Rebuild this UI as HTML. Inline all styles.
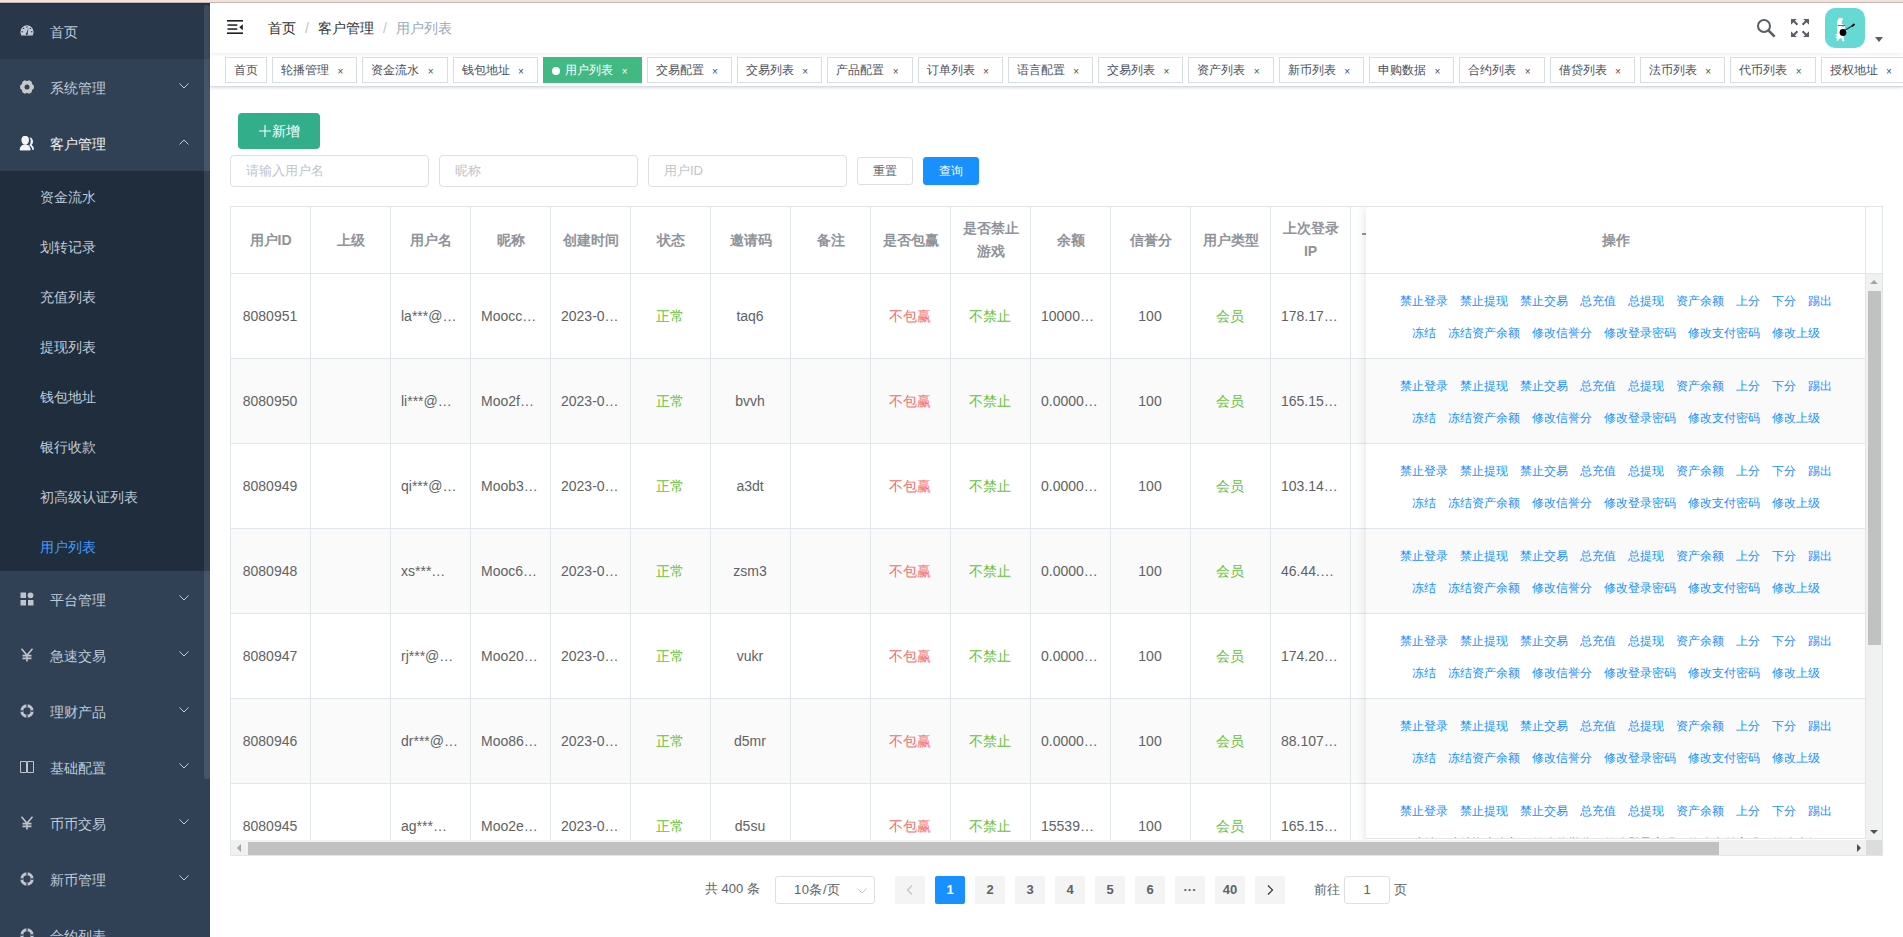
<!DOCTYPE html>
<html><head><meta charset="utf-8">
<style>
*{box-sizing:border-box;margin:0;padding:0}
html,body{width:1903px;height:937px;overflow:hidden;background:#fff;font-family:"Liberation Sans",sans-serif;font-size:14px;color:#606266}
.topline{position:absolute;left:0;top:0;width:1903px;height:3px;background:#f5e1da;border-bottom:1px solid #c8b8b3;z-index:5}
#side{position:absolute;left:0;top:3px;width:210px;height:934px;background:#304156;overflow:hidden}
.mi{position:absolute;left:0;width:210px;height:56px;color:#bfcbd9;font-size:14px}
.mi .ic{position:absolute;left:20px;top:21px;width:14px;height:14px}
.mi .tx{position:absolute;left:50px;top:1px;line-height:56px}
.mi .ar{position:absolute;left:179px;top:24px;width:10px;height:6px}
.sub{position:absolute;left:0;width:210px;background:#1f2d3d}
.si{position:absolute;left:40px;height:50px;line-height:50px;margin-top:1px;color:#bfcbd9;font-size:14px}
.sbar{position:absolute;left:204px;top:2px;width:6px;height:774px;border-radius:3px;background:rgba(255,255,255,.1)}
#nav{position:absolute;left:210px;top:3px;width:1693px;height:50px;background:#fff;box-shadow:0 1px 4px rgba(0,21,41,.08);z-index:2}
#tags{position:absolute;left:210px;top:53px;z-index:1;width:1693px;height:34px;background:#fff;border-bottom:1px solid #d8dce5;box-shadow:0 1px 3px 0 rgba(0,0,0,.12),0 0 3px 0 rgba(0,0,0,.04);overflow:hidden;white-space:nowrap}
.tg{display:inline-block;position:relative;height:26px;line-height:24px;border:1px solid #d8dce5;color:#495060;background:#fff;padding:0 8px;font-size:12px;margin-left:5px;margin-top:4px;vertical-align:top}
.tg:first-child{margin-left:15px}
.tg.act{background:#42b983;color:#fff;border-color:#42b983}
.tg .dot{display:inline-block;width:8px;height:8px;border-radius:50%;background:#fff;margin-right:5.5px;vertical-align:-1px}
.tg .cl{display:inline-block;width:16px;text-align:center;margin-left:3.3px;font-size:10px;color:#495060;position:relative;top:1px}
.tg.act .cl{color:#fff}

.btn-add{position:absolute;left:238px;top:113px;width:82px;height:36px;border-radius:4px;background:#33ae8b;color:#fff;font-size:14px;line-height:36px;text-align:center}
.inp{position:absolute;top:155px;width:199px;height:32px;border:1px solid #dcdfe6;border-radius:4px;color:#c0c4cc;font-size:13px;line-height:30px;padding-left:15px}
.btn-reset{position:absolute;left:857px;top:157px;width:56px;height:28px;border:1px solid #dcdfe6;border-radius:3px;background:#fff;color:#606266;font-size:12px;line-height:26px;text-align:center}
.btn-query{position:absolute;left:923px;top:157px;width:56px;height:28px;border:1px solid #1890ff;border-radius:3px;background:#1890ff;color:#fff;font-size:12px;line-height:26px;text-align:center}

.tb{position:absolute;left:230px;top:206px;width:1653px;height:650px;border:1px solid #dfe6ec;overflow:hidden;background:#fff}
.thead{position:absolute;left:0;top:0;width:1635px;height:67px;overflow:hidden}
.th{position:absolute;top:0;width:80px;height:67px;border-right:1px solid #dfe6ec;border-bottom:1px solid #dfe6ec;color:#909399;font-weight:bold;font-size:14px;text-align:center}
.th1{position:absolute;left:0;right:0;top:22px;line-height:23px;text-align:center}
.th2{position:absolute;left:0;right:0;top:10px;line-height:23px;text-align:center}
.tbody{position:absolute;left:0;top:67px;width:1635px;height:566px;overflow:hidden}
.tr{position:absolute;left:0;width:1680px;height:85px}
.tr.st{background:#fafafa}
.td{position:absolute;top:0;width:80px;height:85px;border-right:1px solid #dfe6ec;border-bottom:1px solid #dfe6ec}
.cell{position:absolute;left:0;right:0;top:31px;line-height:23px;padding:0 11px 0 10px;white-space:nowrap;overflow:hidden;text-overflow:ellipsis;text-align:center;color:#606266;font-size:14px}
.fx{position:absolute;left:1135px;top:0;width:500px;height:637px;box-shadow:0 0 10px rgba(0,0,0,.12);background:#fff}
.fxh{position:absolute;left:0;top:0;width:500px;height:67px;border-right:1px solid #dfe6ec;border-bottom:1px solid #dfe6ec;color:#909399;font-weight:bold;font-size:14px;background:#fff}
.fxb{position:absolute;left:0;top:67px;width:500px;height:565px;overflow:hidden;border-bottom:1px solid #dfe6ec}
.ftr{position:absolute;left:0;width:500px;height:85px;border-right:1px solid #dfe6ec;border-bottom:1px solid #dfe6ec;background:#fff}
.ftr.st{background:#fafafa}
.opl{position:absolute;left:0;width:499px;text-align:center;white-space:nowrap;font-size:12px;line-height:16px;color:#1890ff}
.opl span{display:inline-block;margin:0 6px}
.gut{position:absolute;left:1635px;top:0;width:16px;height:67px;border-bottom:1px solid #dfe6ec;background:#fff}
.vsb{position:absolute;left:1635px;top:67px;width:16px;height:566px;background:#f1f1f1}
.vth{position:absolute;left:2px;top:17px;width:13px;height:354px;background:#c1c1c1}
.vsb .up{position:absolute;left:4px;top:6px;width:0;height:0;border-left:4px solid transparent;border-right:4px solid transparent;border-bottom:4px solid #a3a3a3}
.vsb .dn{position:absolute;left:4px;bottom:6px;width:0;height:0;border-left:4px solid transparent;border-right:4px solid transparent;border-top:4px solid #505050}
.hsb{position:absolute;left:0;top:633px;width:1635px;height:15px;background:#f1f1f1}
.hth{position:absolute;left:17px;top:2px;width:1471px;height:13px;background:#c1c1c1}
.hsb .lf{position:absolute;left:6px;top:4px;width:0;height:0;border-top:4px solid transparent;border-bottom:4px solid transparent;border-right:4px solid #a3a3a3}
.hsb .rt{position:absolute;right:5px;top:4px;width:0;height:0;border-top:4px solid transparent;border-bottom:4px solid transparent;border-left:4px solid #505050}
.corner{position:absolute;left:1635px;top:633px;width:16px;height:15px;background:#dcdcdc}

.pg{position:absolute;left:0;top:0}
.pg-total{position:absolute;left:705px;top:878px;line-height:22px;font-size:13px;color:#606266;white-space:nowrap}
.pg-size{position:absolute;left:775px;top:876px;width:100px;height:28px;border:1px solid #dcdfe6;border-radius:3px;font-size:13px;line-height:26px;color:#606266;padding-left:18px;letter-spacing:.5px}
.pb{position:absolute;top:876px;width:30px;height:28px;border-radius:2px;background:#f4f4f5;color:#606266;font-size:13px;font-weight:bold;line-height:28px;text-align:center}
.pb.act{background:#1890ff;color:#fff}
.pg-go{position:absolute;top:879px;white-space:nowrap;line-height:22px;font-size:13px;color:#606266}
.pg-inp{position:absolute;left:1344px;top:876px;width:46px;height:28px;border:1px solid #dcdfe6;border-radius:3px;font-size:13px;line-height:26px;color:#606266;text-align:center}
</style></head><body>
<div class="topline"></div>
<div id="side"><div class="mi" style="top:0px;background:#29374a;"><svg class="ic" viewBox="0 0 14 14"><path d="M7 1.2A6.6 6.6 0 0 0 0.4 7.8c0 1.3.3 2.4.9 3.6h11.4c.6-1.2.9-2.3.9-3.6A6.6 6.6 0 0 0 7 1.2z" fill="#c0c8d4"/><g fill="#263445"><circle cx="7" cy="3" r=".7"/><circle cx="3.6" cy="4.4" r=".7"/><circle cx="10.4" cy="4.4" r=".7"/><circle cx="2.2" cy="7.8" r=".7"/><circle cx="11.8" cy="7.8" r=".7"/><path d="M8.6 3.8 L7.6 9.2 A1 1 0 1 1 6.4 9 z"/></g></svg><span class="tx">首页</span></div><div class="mi" style="top:56px;"><svg class="ic" viewBox="0 0 14 14"><path d="M12.39 4.37 L13.85 5.54 L13.85 8.46 L12.39 9.63 L11.97 10.36 L11.68 12.20 L9.16 13.66 L7.42 12.99 L6.58 12.99 L4.84 13.66 L2.32 12.20 L2.03 10.36 L1.61 9.63 L0.15 8.46 L0.15 5.54 L1.61 4.37 L2.03 3.64 L2.32 1.80 L4.84 0.34 L6.58 1.01 L7.42 1.01 L9.16 0.34 L11.68 1.80 L11.97 3.64Z" fill="#c8c8c8"/><circle cx="7" cy="7" r="2.5" fill="#304156"/></svg><span class="tx">系统管理</span><svg class="ar" viewBox="0 0 10 6"><path d="M.5 .5L5 5 9.5 .5" fill="none" stroke="#bfcbd9" stroke-width="1"/></svg></div><div class="mi" style="top:112px;color:#f4f4f5;"><svg class="ic" viewBox="0 0 14 14" style="overflow:visible"><path d="M9.4 1.6C11.7 1.5 13 3.4 13 5.5 13 7.2 12.2 8.4 11.4 9 12.8 9.7 13.9 11.1 14 13.4L12.4 13.9C12 11.6 10.6 10.1 9.1 9.5 10.1 8.5 10.7 7 10.7 5.2 10.7 3.8 10.2 2.4 9.4 1.6Z" fill="#f4f4f5"/><g fill="#f4f4f5" stroke="#304156" stroke-width="1" paint-order="stroke"><ellipse cx="5.2" cy="4.1" rx="3.6" ry="4.2"/><path d="M-0.2 14.2C-0.2 10.6 2 8.4 5.2 8.4 8.4 8.4 10.4 10.6 10.4 14.2Z"/></g><g fill="#f4f4f5"><ellipse cx="5.2" cy="4.1" rx="3.6" ry="4.2"/><path d="M-0.2 14.2C-0.2 10.6 2 8.4 5.2 8.4 8.4 8.4 10.4 10.6 10.4 14.2Z"/></g></svg><span class="tx">客户管理</span><svg class="ar" viewBox="0 0 10 6"><path d="M.5 5.5L5 1 9.5 5.5" fill="none" stroke="#bfcbd9" stroke-width="1"/></svg></div><div class="sub" style="top:168px;height:400px"><div class="si" style="top:0px">资金流水</div><div class="si" style="top:50px">划转记录</div><div class="si" style="top:100px">充值列表</div><div class="si" style="top:150px">提现列表</div><div class="si" style="top:200px">钱包地址</div><div class="si" style="top:250px">银行收款</div><div class="si" style="top:300px">初高级认证列表</div><div class="si" style="top:350px;color:#409eff">用户列表</div></div><div class="mi" style="top:568px;"><svg class="ic" viewBox="0 0 14 14" fill="#c0c4cc"><rect x="0.5" y="0.5" width="5.5" height="5.5"/><circle cx="10.5" cy="3.3" r="2.9"/><rect x="0.5" y="8" width="5.5" height="5.5"/><rect x="8" y="8" width="5.5" height="5.5"/></svg><span class="tx">平台管理</span><svg class="ar" viewBox="0 0 10 6"><path d="M.5 .5L5 5 9.5 .5" fill="none" stroke="#bfcbd9" stroke-width="1"/></svg></div><div class="mi" style="top:624px;"><svg class="ic" viewBox="0 0 14 14" fill="none" stroke="#c0c4cc" stroke-width="1.6"><path d="M1.5 0.8L7 7.2 12.5 0.8M7 7.2V13.6M2.5 7.6H11.5M2.5 10.4H11.5"/></svg><span class="tx">急速交易</span><svg class="ar" viewBox="0 0 10 6"><path d="M.5 .5L5 5 9.5 .5" fill="none" stroke="#bfcbd9" stroke-width="1"/></svg></div><div class="mi" style="top:680px;"><svg class="ic" viewBox="0 0 14 14"><circle cx="7" cy="7" r="5.2" fill="none" stroke="#c0c4cc" stroke-width="3"/><g stroke="#304156" stroke-width="1.3"><path d="M7 0V3M7 11V14M0 7H3M11 7H14"/></g></svg><span class="tx">理财产品</span><svg class="ar" viewBox="0 0 10 6"><path d="M.5 .5L5 5 9.5 .5" fill="none" stroke="#bfcbd9" stroke-width="1"/></svg></div><div class="mi" style="top:736px;"><svg class="ic" viewBox="0 0 14 14" fill="none" stroke="#c0c4cc" stroke-width="1"><path d="M.5 1.5H6.5V12.5H.5zM7.5 1.5H13.5V12.5H7.5z"/></svg><span class="tx">基础配置</span><svg class="ar" viewBox="0 0 10 6"><path d="M.5 .5L5 5 9.5 .5" fill="none" stroke="#bfcbd9" stroke-width="1"/></svg></div><div class="mi" style="top:792px;"><svg class="ic" viewBox="0 0 14 14" fill="none" stroke="#c0c4cc" stroke-width="1.6"><path d="M1.5 0.8L7 7.2 12.5 0.8M7 7.2V13.6M2.5 7.6H11.5M2.5 10.4H11.5"/></svg><span class="tx">币币交易</span><svg class="ar" viewBox="0 0 10 6"><path d="M.5 .5L5 5 9.5 .5" fill="none" stroke="#bfcbd9" stroke-width="1"/></svg></div><div class="mi" style="top:848px;"><svg class="ic" viewBox="0 0 14 14"><circle cx="7" cy="7" r="5.2" fill="none" stroke="#c0c4cc" stroke-width="3"/><g stroke="#304156" stroke-width="1.3"><path d="M7 0V3M7 11V14M0 7H3M11 7H14"/></g></svg><span class="tx">新币管理</span><svg class="ar" viewBox="0 0 10 6"><path d="M.5 .5L5 5 9.5 .5" fill="none" stroke="#bfcbd9" stroke-width="1"/></svg></div><div class="mi" style="top:904px;"><svg class="ic" viewBox="0 0 14 14"><circle cx="7" cy="7" r="5.2" fill="none" stroke="#c0c4cc" stroke-width="3"/><g stroke="#304156" stroke-width="1.3"><path d="M7 0V3M7 11V14M0 7H3M11 7H14"/></g></svg><span class="tx">合约列表</span></div><div class="sbar"></div><div style="position:absolute;left:0;top:0;width:210px;height:1px;background:#1f2d3d"></div></div>
<div id="nav"><svg style="position:absolute;left:17px;top:16px" width="18" height="16" viewBox="0 0 18 16"><g fill="#1f1f1f"><rect x="0" y="1" width="16" height="1.6"/><rect x="0.5" y="5.3" width="9.8" height="1.5"/><rect x="0.5" y="9.3" width="9.8" height="1.5"/><rect x="0" y="13.4" width="16" height="1.6"/><path d="M15.8 5.3V11.2L12.3 8.3z"/></g></svg><div style="position:absolute;left:58px;top:0;line-height:50px;font-size:14px;white-space:nowrap"><span style="color:#303133">首页</span><span style="color:#c0c4cc;margin:0 9px">/</span><span style="color:#303133">客户管理</span><span style="color:#c0c4cc;margin:0 9px">/</span><span style="color:#97a8be">用户列表</span></div><svg style="position:absolute;left:1546px;top:15px" width="20" height="20" viewBox="0 0 20 20"><circle cx="8" cy="8" r="6" fill="none" stroke="#5a5e66" stroke-width="2"/><path d="M12.2 12.2L18.6 18.6" stroke="#5a5e66" stroke-width="2.6"/></svg><svg style="position:absolute;left:1580px;top:15px" width="20" height="20" viewBox="0 0 20 20" fill="#5a5e66"><path d="M1 1H6.8L5 2.8 8.2 6 6.7 7.5 3.5 4.3 1 6.8z"/><path d="M19 1H13.2L15 2.8 11.8 6 13.3 7.5 16.5 4.3 19 6.8z"/><path d="M1 19H6.8L5 17.2 8.2 14 6.7 12.5 3.5 15.7 1 13.2z"/><path d="M19 19H13.2L15 17.2 11.8 14 13.3 12.5 16.5 15.7 19 13.2z"/></svg><div style="position:absolute;left:1615px;top:5px;width:40px;height:40px;border-radius:10px;background:#66d9d5;overflow:hidden"><svg width="40" height="40" viewBox="0 0 40 40"><path d="M13.5 10.5 L15 9.5 L16 10.5 L17 9.8 L18 11 L17 13 L16.5 15.5 L19 17 L20 19 L19.5 21 L22 22.5 L21.5 24.5 L19 26 L18.5 28 L19 31 L19.5 33 L17.5 33.5 L16.5 30 L14 31 L13 33 L11.5 32.5 L12 30.5 L10.5 29.5 L12 28 L10.5 26.5 L12.5 25.5 L12 22 L12.5 18 L12 14 Z" fill="#fff"/><circle cx="18" cy="24.5" r="3.4" fill="#000"/><path d="M20.5 22 L28.5 17" stroke="#1a3a3a" stroke-width="1.1"/><path d="M27 18.2 L29.5 16" stroke="#000" stroke-width="1.8"/><path d="M13 17.5 H20" stroke="#444" stroke-width=".8"/><circle cx="18.2" cy="18.5" r=".7" fill="#f4a0c0"/></svg></div><svg style="position:absolute;left:1665px;top:34px" width="8" height="5" viewBox="0 0 8 5"><path d="M0 0H8L4 5z" fill="#5a5e66"/></svg></div>
<div id="tags"><span class="tg">首页</span><span class="tg">轮播管理<span class="cl">×</span></span><span class="tg">资金流水<span class="cl">×</span></span><span class="tg">钱包地址<span class="cl">×</span></span><span class="tg act"><i class="dot"></i>用户列表<span class="cl">×</span></span><span class="tg">交易配置<span class="cl">×</span></span><span class="tg">交易列表<span class="cl">×</span></span><span class="tg">产品配置<span class="cl">×</span></span><span class="tg">订单列表<span class="cl">×</span></span><span class="tg">语言配置<span class="cl">×</span></span><span class="tg">交易列表<span class="cl">×</span></span><span class="tg">资产列表<span class="cl">×</span></span><span class="tg">新币列表<span class="cl">×</span></span><span class="tg">申购数据<span class="cl">×</span></span><span class="tg">合约列表<span class="cl">×</span></span><span class="tg">借贷列表<span class="cl">×</span></span><span class="tg">法币列表<span class="cl">×</span></span><span class="tg">代币列表<span class="cl">×</span></span><span class="tg">授权地址<span class="cl">×</span></span></div>
<div class="btn-add"><svg style="position:absolute;left:21px;top:12px" width="12" height="12" viewBox="0 0 12 12"><path d="M0 6H12M6 0V12" stroke="#fff" stroke-width="1.1"/></svg><span style="position:absolute;left:34px;top:0">新增</span></div><div class="inp" style="left:230px">请输入用户名</div><div class="inp" style="left:439px">昵称</div><div class="inp" style="left:648px">用户ID</div><div class="btn-reset">重置</div><div class="btn-query">查询</div><div class="tb"><div class="thead"><i style="position:absolute;left:1131px;top:26px;width:4px;height:2px;background:#909399"></i><div class="th" style="left:0px"><div class="th1">用户ID</div></div><div class="th" style="left:80px"><div class="th1">上级</div></div><div class="th" style="left:160px"><div class="th1">用户名</div></div><div class="th" style="left:240px"><div class="th1">昵称</div></div><div class="th" style="left:320px"><div class="th1">创建时间</div></div><div class="th" style="left:400px"><div class="th1">状态</div></div><div class="th" style="left:480px"><div class="th1">邀请码</div></div><div class="th" style="left:560px"><div class="th1">备注</div></div><div class="th" style="left:640px"><div class="th1">是否包赢</div></div><div class="th" style="left:720px"><div class="th2">是否禁止<br>游戏</div></div><div class="th" style="left:800px"><div class="th1">余额</div></div><div class="th" style="left:880px"><div class="th1">信誉分</div></div><div class="th" style="left:960px"><div class="th1">用户类型</div></div><div class="th" style="left:1040px"><div class="th2">上次登录<br>IP</div></div><div class="th" style="left:1120px"></div><div class="th" style="left:1200px"><div class="th1">更新时间</div></div></div><div class="tbody"><div class="tr" style="top:0px"><div class="td" style="left:0px"><div class="cell">8080951</div></div><div class="td" style="left:80px"><div class="cell"></div></div><div class="td" style="left:160px"><div class="cell">la***@gmail.com</div></div><div class="td" style="left:240px"><div class="cell">Mooccabcd</div></div><div class="td" style="left:320px"><div class="cell">2023-06-01 12:00:00</div></div><div class="td" style="left:400px"><div class="cell" style="color:#67c23a">正常</div></div><div class="td" style="left:480px"><div class="cell">taq6</div></div><div class="td" style="left:560px"><div class="cell"></div></div><div class="td" style="left:640px"><div class="cell" style="color:#f56c6c">不包赢</div></div><div class="td" style="left:720px"><div class="cell" style="color:#67c23a">不禁止</div></div><div class="td" style="left:800px"><div class="cell">1000000.0000</div></div><div class="td" style="left:880px"><div class="cell">100</div></div><div class="td" style="left:960px"><div class="cell" style="color:#67c23a">会员</div></div><div class="td" style="left:1040px"><div class="cell">178.171.2.3</div></div><div class="td" style="left:1120px"><div class="cell"></div></div><div class="td" style="left:1200px"><div class="cell"></div></div></div><div class="tr st" style="top:85px"><div class="td" style="left:0px"><div class="cell">8080950</div></div><div class="td" style="left:80px"><div class="cell"></div></div><div class="td" style="left:160px"><div class="cell">li***@gmail.com</div></div><div class="td" style="left:240px"><div class="cell">Moo2fabcd</div></div><div class="td" style="left:320px"><div class="cell">2023-06-01 12:00:00</div></div><div class="td" style="left:400px"><div class="cell" style="color:#67c23a">正常</div></div><div class="td" style="left:480px"><div class="cell">bvvh</div></div><div class="td" style="left:560px"><div class="cell"></div></div><div class="td" style="left:640px"><div class="cell" style="color:#f56c6c">不包赢</div></div><div class="td" style="left:720px"><div class="cell" style="color:#67c23a">不禁止</div></div><div class="td" style="left:800px"><div class="cell">0.00000000</div></div><div class="td" style="left:880px"><div class="cell">100</div></div><div class="td" style="left:960px"><div class="cell" style="color:#67c23a">会员</div></div><div class="td" style="left:1040px"><div class="cell">165.154.1.1</div></div><div class="td" style="left:1120px"><div class="cell"></div></div><div class="td" style="left:1200px"><div class="cell"></div></div></div><div class="tr" style="top:170px"><div class="td" style="left:0px"><div class="cell">8080949</div></div><div class="td" style="left:80px"><div class="cell"></div></div><div class="td" style="left:160px"><div class="cell">qi***@gmail.com</div></div><div class="td" style="left:240px"><div class="cell">Moob3abcd</div></div><div class="td" style="left:320px"><div class="cell">2023-06-01 12:00:00</div></div><div class="td" style="left:400px"><div class="cell" style="color:#67c23a">正常</div></div><div class="td" style="left:480px"><div class="cell">a3dt</div></div><div class="td" style="left:560px"><div class="cell"></div></div><div class="td" style="left:640px"><div class="cell" style="color:#f56c6c">不包赢</div></div><div class="td" style="left:720px"><div class="cell" style="color:#67c23a">不禁止</div></div><div class="td" style="left:800px"><div class="cell">0.00000000</div></div><div class="td" style="left:880px"><div class="cell">100</div></div><div class="td" style="left:960px"><div class="cell" style="color:#67c23a">会员</div></div><div class="td" style="left:1040px"><div class="cell">103.141.1.1</div></div><div class="td" style="left:1120px"><div class="cell"></div></div><div class="td" style="left:1200px"><div class="cell"></div></div></div><div class="tr st" style="top:255px"><div class="td" style="left:0px"><div class="cell">8080948</div></div><div class="td" style="left:80px"><div class="cell"></div></div><div class="td" style="left:160px"><div class="cell">xs***@gmail.com</div></div><div class="td" style="left:240px"><div class="cell">Mooc6abcd</div></div><div class="td" style="left:320px"><div class="cell">2023-06-01 12:00:00</div></div><div class="td" style="left:400px"><div class="cell" style="color:#67c23a">正常</div></div><div class="td" style="left:480px"><div class="cell">zsm3</div></div><div class="td" style="left:560px"><div class="cell"></div></div><div class="td" style="left:640px"><div class="cell" style="color:#f56c6c">不包赢</div></div><div class="td" style="left:720px"><div class="cell" style="color:#67c23a">不禁止</div></div><div class="td" style="left:800px"><div class="cell">0.00000000</div></div><div class="td" style="left:880px"><div class="cell">100</div></div><div class="td" style="left:960px"><div class="cell" style="color:#67c23a">会员</div></div><div class="td" style="left:1040px"><div class="cell">46.44.123.1</div></div><div class="td" style="left:1120px"><div class="cell"></div></div><div class="td" style="left:1200px"><div class="cell"></div></div></div><div class="tr" style="top:340px"><div class="td" style="left:0px"><div class="cell">8080947</div></div><div class="td" style="left:80px"><div class="cell"></div></div><div class="td" style="left:160px"><div class="cell">rj***@gmail.com</div></div><div class="td" style="left:240px"><div class="cell">Moo20abcd</div></div><div class="td" style="left:320px"><div class="cell">2023-06-01 12:00:00</div></div><div class="td" style="left:400px"><div class="cell" style="color:#67c23a">正常</div></div><div class="td" style="left:480px"><div class="cell">vukr</div></div><div class="td" style="left:560px"><div class="cell"></div></div><div class="td" style="left:640px"><div class="cell" style="color:#f56c6c">不包赢</div></div><div class="td" style="left:720px"><div class="cell" style="color:#67c23a">不禁止</div></div><div class="td" style="left:800px"><div class="cell">0.00000000</div></div><div class="td" style="left:880px"><div class="cell">100</div></div><div class="td" style="left:960px"><div class="cell" style="color:#67c23a">会员</div></div><div class="td" style="left:1040px"><div class="cell">174.208.1.1</div></div><div class="td" style="left:1120px"><div class="cell"></div></div><div class="td" style="left:1200px"><div class="cell"></div></div></div><div class="tr st" style="top:425px"><div class="td" style="left:0px"><div class="cell">8080946</div></div><div class="td" style="left:80px"><div class="cell"></div></div><div class="td" style="left:160px"><div class="cell">dr***@gmail.com</div></div><div class="td" style="left:240px"><div class="cell">Moo86abcd</div></div><div class="td" style="left:320px"><div class="cell">2023-06-01 12:00:00</div></div><div class="td" style="left:400px"><div class="cell" style="color:#67c23a">正常</div></div><div class="td" style="left:480px"><div class="cell">d5mr</div></div><div class="td" style="left:560px"><div class="cell"></div></div><div class="td" style="left:640px"><div class="cell" style="color:#f56c6c">不包赢</div></div><div class="td" style="left:720px"><div class="cell" style="color:#67c23a">不禁止</div></div><div class="td" style="left:800px"><div class="cell">0.00000000</div></div><div class="td" style="left:880px"><div class="cell">100</div></div><div class="td" style="left:960px"><div class="cell" style="color:#67c23a">会员</div></div><div class="td" style="left:1040px"><div class="cell">88.107.1.1</div></div><div class="td" style="left:1120px"><div class="cell"></div></div><div class="td" style="left:1200px"><div class="cell"></div></div></div><div class="tr" style="top:510px"><div class="td" style="left:0px"><div class="cell">8080945</div></div><div class="td" style="left:80px"><div class="cell"></div></div><div class="td" style="left:160px"><div class="cell">ag***@gmail.com</div></div><div class="td" style="left:240px"><div class="cell">Moo2eabcd</div></div><div class="td" style="left:320px"><div class="cell">2023-06-01 12:00:00</div></div><div class="td" style="left:400px"><div class="cell" style="color:#67c23a">正常</div></div><div class="td" style="left:480px"><div class="cell">d5su</div></div><div class="td" style="left:560px"><div class="cell"></div></div><div class="td" style="left:640px"><div class="cell" style="color:#f56c6c">不包赢</div></div><div class="td" style="left:720px"><div class="cell" style="color:#67c23a">不禁止</div></div><div class="td" style="left:800px"><div class="cell">155390.0000</div></div><div class="td" style="left:880px"><div class="cell">100</div></div><div class="td" style="left:960px"><div class="cell" style="color:#67c23a">会员</div></div><div class="td" style="left:1040px"><div class="cell">165.154.1.1</div></div><div class="td" style="left:1120px"><div class="cell"></div></div><div class="td" style="left:1200px"><div class="cell"></div></div></div></div><div class="fx"><div class="fxh"><div class="th1">操作</div></div><div class="fxb"><div class="ftr" style="top:0px"><div class="opl" style="top:19px"><span>禁止登录</span><span>禁止提现</span><span>禁止交易</span><span>总充值</span><span>总提现</span><span>资产余额</span><span>上分</span><span>下分</span><span>踢出</span></div><div class="opl" style="top:51px"><span>冻结</span><span>冻结资产余额</span><span>修改信誉分</span><span>修改登录密码</span><span>修改支付密码</span><span>修改上级</span></div></div><div class="ftr st" style="top:85px"><div class="opl" style="top:19px"><span>禁止登录</span><span>禁止提现</span><span>禁止交易</span><span>总充值</span><span>总提现</span><span>资产余额</span><span>上分</span><span>下分</span><span>踢出</span></div><div class="opl" style="top:51px"><span>冻结</span><span>冻结资产余额</span><span>修改信誉分</span><span>修改登录密码</span><span>修改支付密码</span><span>修改上级</span></div></div><div class="ftr" style="top:170px"><div class="opl" style="top:19px"><span>禁止登录</span><span>禁止提现</span><span>禁止交易</span><span>总充值</span><span>总提现</span><span>资产余额</span><span>上分</span><span>下分</span><span>踢出</span></div><div class="opl" style="top:51px"><span>冻结</span><span>冻结资产余额</span><span>修改信誉分</span><span>修改登录密码</span><span>修改支付密码</span><span>修改上级</span></div></div><div class="ftr st" style="top:255px"><div class="opl" style="top:19px"><span>禁止登录</span><span>禁止提现</span><span>禁止交易</span><span>总充值</span><span>总提现</span><span>资产余额</span><span>上分</span><span>下分</span><span>踢出</span></div><div class="opl" style="top:51px"><span>冻结</span><span>冻结资产余额</span><span>修改信誉分</span><span>修改登录密码</span><span>修改支付密码</span><span>修改上级</span></div></div><div class="ftr" style="top:340px"><div class="opl" style="top:19px"><span>禁止登录</span><span>禁止提现</span><span>禁止交易</span><span>总充值</span><span>总提现</span><span>资产余额</span><span>上分</span><span>下分</span><span>踢出</span></div><div class="opl" style="top:51px"><span>冻结</span><span>冻结资产余额</span><span>修改信誉分</span><span>修改登录密码</span><span>修改支付密码</span><span>修改上级</span></div></div><div class="ftr st" style="top:425px"><div class="opl" style="top:19px"><span>禁止登录</span><span>禁止提现</span><span>禁止交易</span><span>总充值</span><span>总提现</span><span>资产余额</span><span>上分</span><span>下分</span><span>踢出</span></div><div class="opl" style="top:51px"><span>冻结</span><span>冻结资产余额</span><span>修改信誉分</span><span>修改登录密码</span><span>修改支付密码</span><span>修改上级</span></div></div><div class="ftr" style="top:510px"><div class="opl" style="top:19px"><span>禁止登录</span><span>禁止提现</span><span>禁止交易</span><span>总充值</span><span>总提现</span><span>资产余额</span><span>上分</span><span>下分</span><span>踢出</span></div><div class="opl" style="top:51px"><span>冻结</span><span>冻结资产余额</span><span>修改信誉分</span><span>修改登录密码</span><span>修改支付密码</span><span>修改上级</span></div></div></div></div><div class="gut"></div><div class="vsb"><i class="up"></i><div class="vth"></div><i class="dn"></i></div><div class="hsb"><i class="lf"></i><div class="hth"></div><i class="rt"></i></div><div class="corner"></div></div><div class="pg">
<span class="pg-total">共 400 条</span>
<div class="pg-size">10条/页<svg style="position:absolute;left:81px;top:11px" width="10" height="6" viewBox="0 0 10 6"><path d="M.5 .5L5 5 9.5 .5" fill="none" stroke="#c0c4cc" stroke-width="1"/></svg></div>
<div class="pb" style="left:895px"><svg width="8" height="10" viewBox="0 0 8 10" style="margin-top:9px"><path d="M6 .5L1.5 5 6 9.5" fill="none" stroke="#c0c4cc" stroke-width="1.2"/></svg></div>
<div class="pb act" style="left:935px">1</div>
<div class="pb" style="left:975px">2</div>
<div class="pb" style="left:1015px">3</div>
<div class="pb" style="left:1055px">4</div>
<div class="pb" style="left:1095px">5</div>
<div class="pb" style="left:1135px">6</div>
<div class="pb" style="left:1175px">···</div>
<div class="pb" style="left:1215px">40</div>
<div class="pb" style="left:1255px"><svg width="8" height="10" viewBox="0 0 8 10" style="margin-top:9px"><path d="M2 .5L6.5 5 2 9.5" fill="none" stroke="#303133" stroke-width="1.2"/></svg></div>
<span class="pg-go" style="left:1314px">前往</span>
<div class="pg-inp">1</div>
<span class="pg-go" style="left:1394px">页</span>
</div></body></html>
